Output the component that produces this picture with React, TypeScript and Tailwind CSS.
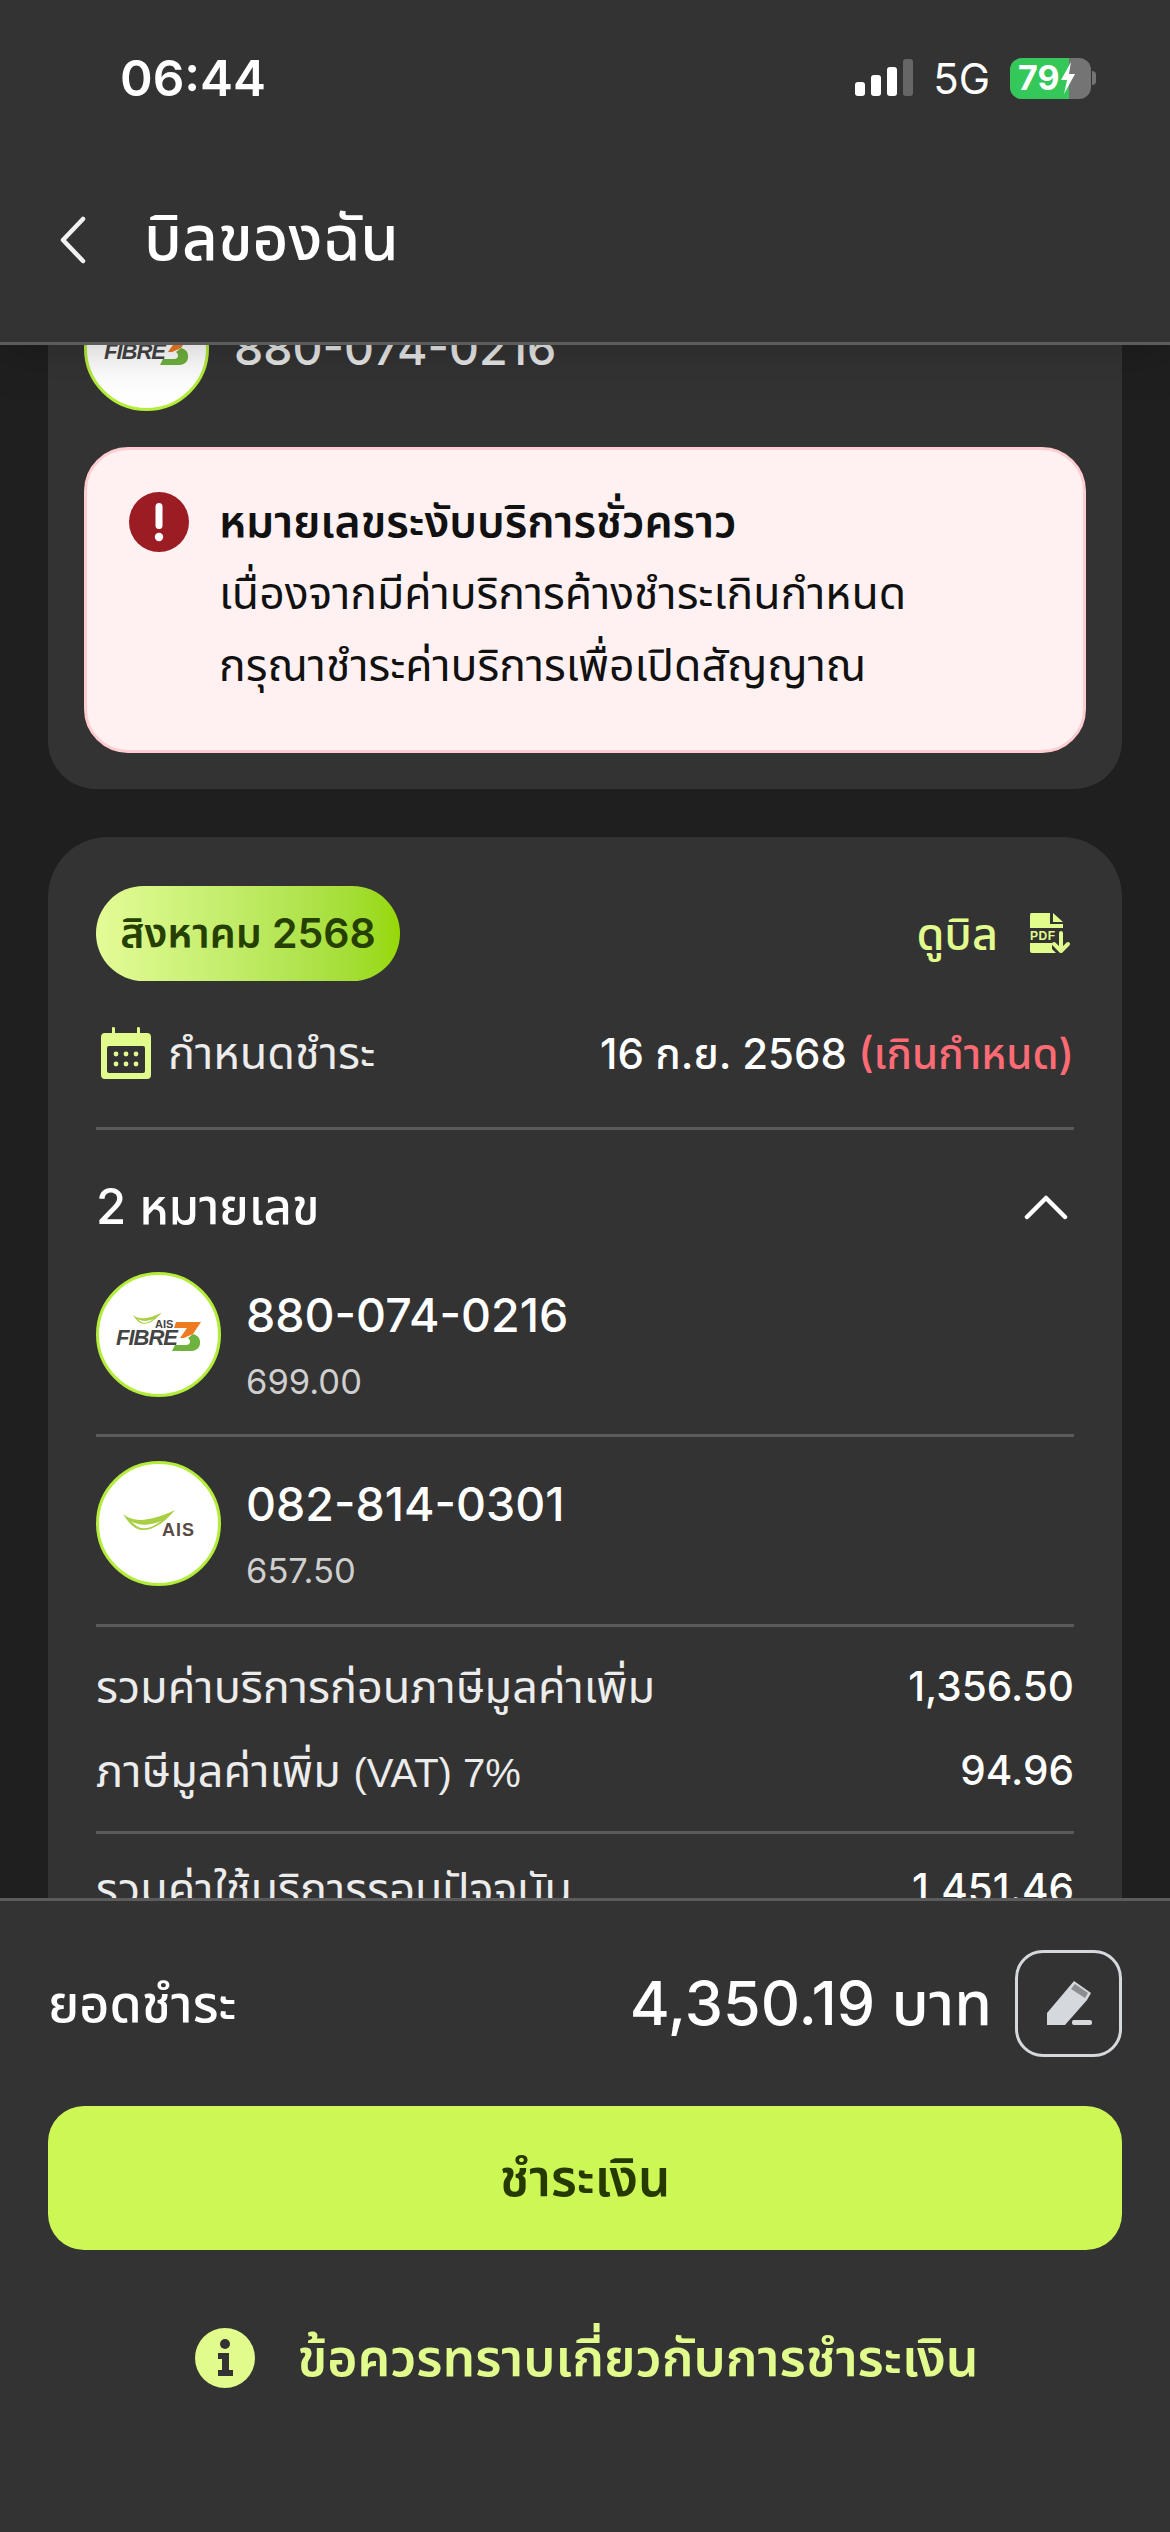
// App.tsx
const LIME = '#ccf755';

function Wing({ x = 0, y = 0, s = 1 }: { x?: number; y?: number; s?: number }) {
  return (
    <g transform={`translate(${x} ${y}) scale(${s})`}>
      <path d="M0 0 C10 8 24 9 52 -4 C42 8 30 17 18 16 C11 15 5 8 0 0Z" fill="#a9cf45" />
      <path d="M8 7 C16 12 26 12 38 7 C30 13 24 15 18 14 C14 13 11 10 8 7Z" fill="#ffffff" />
    </g>
  );
}

function FibreLogo() {
  return (
    <svg viewBox="0 0 125 125" className="w-[125px] h-[125px] shrink-0">
      <circle cx="62.5" cy="62.5" r="61" fill="#fff" stroke="#b4ec3a" strokeWidth="3" />
      <Wing x={37} y={43} s={0.55} />
      <text x="59" y="56" fontSize="11" fontWeight="700" fill="#444" fontFamily="Liberation Sans">AIS</text>
      <path d="M76 79 H95 C103 79 106 72 103 66 C102 64 100 63 97 62 L92 66 C95 68 95 73 90 73 H79Z" fill="#6fb23d" />
      <path d="M80 50 H105 L97 62 L88 66 H84 L91 56 H78Z" fill="#ee7b22" />
      <text x="20" y="73" fontSize="22" fontWeight="700" fontStyle="italic" fill="#444" fontFamily="Liberation Sans" textLength="62">FIBRE</text>
    </svg>
  );
}

function AisLogo() {
  return (
    <svg viewBox="0 0 125 125" className="w-[125px] h-[125px] shrink-0">
      <circle cx="62.5" cy="62.5" r="61" fill="#fff" stroke="#b4ec3a" strokeWidth="3" />
      <Wing x={27} y={53} s={1} />
      <text x="66" y="75" fontSize="18" fontWeight="700" fill="#5a4a44" fontFamily="Liberation Sans" letterSpacing="1">AIS</text>
    </svg>
  );
}

function Divider() {
  return <div className="h-[3px] bg-[#5a5a5a]" />;
}

function NumberRow({ logo, num, amount }: { logo: React.ReactNode; num: string; amount: string }) {
  return (
    <div className="flex items-start gap-[25px] h-[125px]">
      {logo}
      <div className="pt-[15px]">
        <div className="text-[46.5px] leading-[56px] font-medium text-white">{num}</div>
        <div className="text-[34.5px] leading-[42px] mt-[18px] text-[#cfcfcf]">{amount}</div>
      </div>
    </div>
  );
}

function SumRow({ label, value, className = '' }: { label: React.ReactNode; value: string; className?: string }) {
  return (
    <div className={`flex justify-between items-center h-[60px] text-[45px] ${className}`}>
      <span className="text-[#ececec] font-normal">{label}</span>
      <span className="text-[40.5px] font-medium text-white">{value}</span>
    </div>
  );
}

export default function App() {
  return (
    <div className="w-[1170px] h-[2532px] flex flex-col overflow-hidden bg-[#1f1f1f] font-['Inter','Noto_Sans_Thai','Noto_Sans',sans-serif]">
      {/* header */}
      <header className="relative z-10 h-[345px] shrink-0 bg-[#333333] border-b-[3px] border-[#5c5c5c] shadow-[0_0_50px_rgba(0,0,0,0.25)]">
        <div className="flex items-center justify-between h-[156px] pl-[120px] pr-[74px]">
          <span className="text-[49.5px] font-semibold text-white">06:44</span>
          <div className="flex items-center">
            <svg width="58" height="38" viewBox="0 0 58 38">
              <rect x="0" y="23" width="10" height="14" rx="3" fill="#fff" />
              <rect x="16" y="16" width="10" height="21" rx="3" fill="#fff" />
              <rect x="32" y="8" width="10" height="29" rx="3" fill="#fff" />
              <rect x="48" y="0" width="10" height="37" rx="3" fill="#666" />
            </svg>
            <span className="ml-[20px] text-[42px] text-white">5G</span>
            <div className="ml-[20px] relative w-[81px] h-[41px] rounded-[12px] overflow-hidden bg-[#747474]">
              <div className="w-[59px] h-full bg-[#34c759]" />
              <div className="absolute inset-0 flex items-center pl-[8px] text-[34px] font-bold text-white leading-none">
                79
                <svg width="14" height="32" viewBox="0 0 14 32" className="ml-[1px]">
                  <path d="M10 0 L0 18 H6 L3 32 L14 12 H8Z" fill="#fff" />
                </svg>
              </div>
            </div>
            <div className="ml-[1px] w-[4px] h-[14px] rounded-r-full bg-[#747474]" />
          </div>
        </div>
        <div className="flex items-center h-[168px] pl-[60px] gap-[60px]">
          <svg width="26" height="48" viewBox="0 0 26 48" fill="none" stroke="#f2f2f2" strokeWidth="4.5" strokeLinecap="round" strokeLinejoin="round">
            <path d="M23 3 L3 24 L23 45" />
          </svg>
          <h1 className="text-[62px] font-medium text-white -ml-[2px] -mt-[5px]">บิลของฉัน</h1>
        </div>
      </header>

      {/* scrolled content, clipped by header and footer */}
      <main className="flex-1 min-h-0 overflow-hidden px-[48px]">
        <div className="-mt-[95px]">
          <section className="bg-[#333333] rounded-[48px] px-[36px] pt-[36px] pb-[36px]">
            <div className="flex items-center gap-[25px]">
              <FibreLogo />
              <div className="text-[46.5px] font-medium text-[#e6e6e6]">880-074-0216</div>
            </div>
            <div className="mt-[36px] h-[306px] rounded-[44px] bg-[#fff1f1] border-[3px] border-[#fecdd0] flex pl-[42px] pt-[42px] gap-[30px]">
              <svg width="60" height="60" viewBox="0 0 60 60" className="shrink-0">
                <circle cx="30" cy="30" r="30" fill="#9b1c22" />
                <rect x="26.5" y="11" width="7" height="26" rx="3.5" fill="#fff" />
                <circle cx="30" cy="45" r="4.2" fill="#fff" />
              </svg>
              <div className="text-[44.5px] leading-[72px] text-[#111] -mt-[7px]">
                <div className="font-semibold">หมายเลขระงับบริการชั่วคราว</div>
                <div>เนื่องจากมีค่าบริการค้างชำระเกินกำหนด</div>
                <div>กรุณาชำระค่าบริการเพื่อเปิดสัญญาณ</div>
              </div>
            </div>
          </section>

          <section className="mt-[48px] bg-[#333333] rounded-[60px] px-[48px] pt-[49px] pb-[40px]">
            <div className="flex items-center justify-between">
              <div className="h-[95px] w-[304px] rounded-full bg-gradient-to-r from-[#e4fc97] to-[#97d800] flex items-center justify-center text-[41px] font-semibold text-[#254000]">
                สิงหาคม 2568
              </div>
              <div className="flex items-center gap-[30px] pr-[2px] text-[45px] font-medium text-[#e1fb8c]">
                <span>ดูบิล</span>
                <svg width="44" height="42" viewBox="0 0 44 42">
                  <path d="M3 0 H22 V11 H35 V15 H2 V3 Q2 0 3 0Z M25 0 L35 9 H25Z" fill="#e1fb8c" />
                  <path d="M2 30 H24 V36 L28 40 H4 Q2 40 2 38Z" fill="#e1fb8c" />
                  <text x="2" y="27" fontSize="12" fontWeight="700" fill="#e1fb8c" fontFamily="Liberation Sans" letterSpacing="0.6">PDF</text>
                  <path d="M33 20 V37 M26 31 L33 38 L40 31" stroke="#e1fb8c" strokeWidth="4" fill="none" strokeLinecap="round" strokeLinejoin="round" />
                </svg>
              </div>
            </div>

            <div className="mt-[46px] flex items-center justify-between h-[52px]">
              <div className="flex items-center gap-[17px] pl-[5px] text-[45px] text-[#ececec]">
                <svg width="50" height="52" viewBox="0 0 50 52">
                  <path d="M4 6 H11 V1 Q11 0 12 0 Q14 0 14 1 V6 H36 V1 Q36 0 37 0 Q39 0 39 1 V6 H46 Q50 6 50 10 V48 Q50 52 46 52 H4 Q0 52 0 48 V10 Q0 6 4 6Z" fill="#e1fb8c" />
                  <rect x="6" y="19" width="38" height="27" rx="2" fill="#333" />
                  <g fill="#e1fb8c">
                    <circle cx="15" cy="27" r="2.4" /><circle cx="25" cy="27" r="2.4" /><circle cx="35" cy="27" r="2.4" />
                    <circle cx="15" cy="37" r="2.4" /><circle cx="25" cy="37" r="2.4" /><circle cx="35" cy="37" r="2.4" />
                  </g>
                </svg>
                <span>กำหนดชำระ</span>
              </div>
              <div className="text-[42px] font-medium text-white">
                16 ก.ย. 2568 <span className="text-[#ff6b75]">(เกินกำหนด)</span>
              </div>
            </div>

            <div className="mt-[48px]"><Divider /></div>

            <div className="mt-[47px] h-[60px] flex items-center justify-between">
              <span className="text-[49px] font-medium text-white">2 หมายเลข</span>
              <svg width="44" height="26" viewBox="0 0 44 26" fill="none" stroke="#fff" strokeWidth="4.5" strokeLinecap="round" strokeLinejoin="round" className="mr-[6px]">
                <path d="M3 23 L22 4 L41 23" />
              </svg>
            </div>

            <div className="mt-[35px]">
              <NumberRow logo={<FibreLogo />} num="880-074-0216" amount="699.00" />
            </div>
            <div className="mt-[37px]"><Divider /></div>
            <div className="mt-[24px]">
              <NumberRow logo={<AisLogo />} num="082-814-0301" amount="657.50" />
            </div>
            <div className="mt-[38px]"><Divider /></div>

            <SumRow className="mt-[30px]" label="รวมค่าบริการก่อนภาษีมูลค่าเพิ่ม" value="1,356.50" />
            <SumRow
              className="mt-[24px]"
              label={<>ภาษีมูลค่าเพิ่ม <span className="font-['Liberation_Sans',sans-serif] text-[40px]">(VAT) 7%</span></>}
              value="94.96"
            />
            <div className="mt-[30px]"><Divider /></div>
            <SumRow className="mt-[25px]" label="รวมค่าใช้บริการรอบปัจจุบัน" value="1,451.46" />
          </section>
        </div>
      </main>

      {/* footer */}
      <footer className="relative z-10 h-[634px] shrink-0 bg-[#333333] border-t-[3px] border-[#5c5c5c] px-[48px] pt-[49px]">
        <div className="flex items-center justify-between h-[107px]">
          <span className="text-[52px] font-medium text-white">ยอดชำระ</span>
          <div className="flex items-center gap-[23px]">
            <span className="text-[61px] font-medium text-white">4,350.19 บาท</span>
            <div className="w-[107px] h-[107px] rounded-[28px] border-[3px] border-[#d5d8dc] flex items-center justify-center">
              <svg width="48" height="46" viewBox="0 0 48 46">
                <path d="M29 0 L46 12 L42 19 L20 44 H2 V32 Z" fill="#d5d8dc" />
                <path d="M30 3 L43 12 L40 17 L26 8Z" fill="#333" opacity="0.45" />
                <rect x="27" y="39" width="20" height="5" rx="2" fill="#d5d8dc" />
              </svg>
            </div>
          </div>
        </div>
        <button className="mt-[49px] w-full h-[144px] rounded-[36px] text-[51px] font-semibold text-[#263a00]" style={{ backgroundColor: LIME }}>
          ชำระเงิน
        </button>
        <div className="mt-[69px] flex items-center justify-center gap-[42px] pl-[4px]">
          <svg width="60" height="60" viewBox="0 0 60 60" className="shrink-0">
            <circle cx="30" cy="30" r="30" fill="#e1fb8c" />
            <circle cx="30" cy="16" r="5" fill="#333" />
            <path d="M23 25 H34 V42 H38 V48 H23 V42 H27 V31 H23Z" fill="#333" />
          </svg>
          <span className="text-[51.7px] font-semibold text-[#e1fb8c]">ข้อควรทราบเกี่ยวกับการชำระเงิน</span>
        </div>
      </footer>
    </div>
  );
}
